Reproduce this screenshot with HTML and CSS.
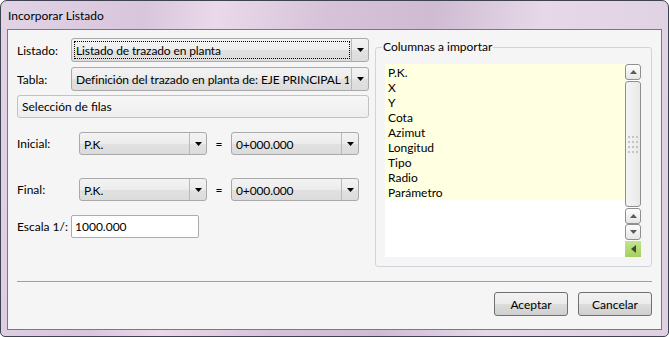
FILE: index.html
```html
<!DOCTYPE html>
<html lang="es">
<head>
    <meta charset="UTF-8">
    <meta name="viewport" content="width=device-width, initial-scale=1.0">
    <title>Incorporar Listado</title>
    <link rel="stylesheet" href="styles.css">
</head>
<body>

<div class="window">
    <div class="titlebar">Incorporar Listado</div>

    <div class="client">
        <div class="main">

            <!-- Left side: listing, table and row selection -->
            <div class="left">
                <div class="row">
                    <span class="label">Listado:</span>
                    <div class="combo wide">
                        <span class="combo-text focused">Listado de trazado en planta</span>
                        <span class="combo-arrow"><svg width="7" height="4" viewBox="0 0 7 4"><path d="M0 0h7L3.5 4z" fill="#000"/></svg></span>
                    </div>
                </div>

                <div class="row row-tabla">
                    <span class="label">Tabla:</span>
                    <div class="combo wide">
                        <span class="combo-text">Definición del trazado en planta de: EJE PRINCIPAL 1</span>
                        <span class="combo-arrow"><svg width="7" height="4" viewBox="0 0 7 4"><path d="M0 0h7L3.5 4z" fill="#000"/></svg></span>
                    </div>
                </div>

                <div class="section-bar">Selección de filas</div>

                <div class="row row-range row-inicial">
                    <span class="label label-range">Inicial:</span>
                    <div class="combo small">
                        <span class="combo-text">P.K.</span>
                        <span class="combo-arrow"><svg width="7" height="4" viewBox="0 0 7 4"><path d="M0 0h7L3.5 4z" fill="#000"/></svg></span>
                    </div>
                    <span class="equals">=</span>
                    <div class="combo small">
                        <span class="combo-text">0+000.000</span>
                        <span class="combo-arrow"><svg width="7" height="4" viewBox="0 0 7 4"><path d="M0 0h7L3.5 4z" fill="#000"/></svg></span>
                    </div>
                </div>

                <div class="row row-range row-final">
                    <span class="label label-range">Final:</span>
                    <div class="combo small">
                        <span class="combo-text">P.K.</span>
                        <span class="combo-arrow"><svg width="7" height="4" viewBox="0 0 7 4"><path d="M0 0h7L3.5 4z" fill="#000"/></svg></span>
                    </div>
                    <span class="equals">=</span>
                    <div class="combo small">
                        <span class="combo-text">0+000.000</span>
                        <span class="combo-arrow"><svg width="7" height="4" viewBox="0 0 7 4"><path d="M0 0h7L3.5 4z" fill="#000"/></svg></span>
                    </div>
                </div>

                <div class="row row-scale">
                    <span class="label">Escala 1/:</span>
                    <input class="textbox" type="text" value="1000.000">
                </div>
            </div>

            <!-- Right side: columns to import -->
            <fieldset class="group">
                <legend>Columnas a importar</legend>
                <div class="listbox">
                    <ul class="items">
                        <li>P.K.</li>
                        <li>X</li>
                        <li>Y</li>
                        <li>Cota</li>
                        <li>Azimut</li>
                        <li>Longitud</li>
                        <li>Tipo</li>
                        <li>Radio</li>
                        <li>Parámetro</li>
                    </ul>
                    <div class="scrollbar">
                        <div class="sb-btn"><svg width="7" height="4" viewBox="0 0 7 4"><path d="M0 4h7L3.5 0z" fill="#5a5a5a"/></svg></div>
                        <div class="sb-thumb">
                            <svg width="10" height="17" viewBox="0 0 10 17">
                                <g fill="#c4c4c4">
                                    <rect x="0" y="0" width="2" height="2"/><rect x="4" y="0" width="2" height="2"/><rect x="8" y="0" width="2" height="2"/>
                                    <rect x="0" y="5" width="2" height="2"/><rect x="4" y="5" width="2" height="2"/><rect x="8" y="5" width="2" height="2"/>
                                    <rect x="0" y="10" width="2" height="2"/><rect x="4" y="10" width="2" height="2"/><rect x="8" y="10" width="2" height="2"/>
                                    <rect x="0" y="15" width="2" height="2"/><rect x="4" y="15" width="2" height="2"/><rect x="8" y="15" width="2" height="2"/>
                                </g>
                            </svg>
                        </div>
                        <div class="sb-btn"><svg width="7" height="4" viewBox="0 0 7 4"><path d="M0 4h7L3.5 0z" fill="#5a5a5a"/></svg></div>
                        <div class="sb-btn sb-down"><svg width="7" height="4" viewBox="0 0 7 4"><path d="M0 0h7L3.5 4z" fill="#5a5a5a"/></svg></div>
                        <div class="sb-green"><svg width="5" height="8" viewBox="0 0 5 8"><path d="M5 0v8L0 4z" fill="#3d4a2c"/></svg></div>
                    </div>
                </div>
            </fieldset>
        </div>

        <div class="separator"></div>

        <div class="buttons">
            <button class="btn">Aceptar</button>
            <button class="btn">Cancelar</button>
        </div>
    </div>
</div>

</body>
</html>
```

FILE: styles.css
```css
* {
    box-sizing: border-box;
}

body {
    margin: 0;
    font-family: Lato, "Noto Sans", sans-serif;
    font-size: 12px;
    color: #000;
}

/* Window frame */
.window {
    width: 669px;
    height: 337px;
    display: flex;
    flex-direction: column;
    border: 1px solid #3f4250;
    border-radius: 7px 7px 5px 5px;
    padding: 0 6px 6px 6px;
    background: linear-gradient(100deg, #e2d3e5 0%, #d8c6dc 20%, #ead9ea 30%, #d6c3d9 45%, #cfbcd3 60%, #e6d8e8 75%, #ddd0e1 100%);
}

.titlebar {
    height: 28px;
    padding: 7px 0 0 1px;
    line-height: 16px;
}

.client {
    flex: 1;
    display: flex;
    flex-direction: column;
    border: 1px solid #7c7784;
    background-color: #f5f5f5;
    padding: 8px 9px 0 9px;
}

.main {
    display: flex;
    gap: 6px;
}

/* Left column */
.left {
    width: 352px;
    display: flex;
    flex-direction: column;
}

.row {
    display: flex;
    align-items: center;
}

.row-tabla {
    margin-top: 5px;
}

.row-inicial {
    margin-top: 14px;
}

.row-final {
    margin-top: 23px;
}

.row-scale {
    margin-top: 14px;
}

.label {
    width: 54px;
    flex-shrink: 0;
}

.label-range {
    width: 62px;
}

.combo {
    display: flex;
    height: 24px;
    border: 1px solid #a9a9a9;
    border-radius: 3px;
    background: linear-gradient(#f3f3f3 0%, #ececec 50%, #e1e1e1 51%, #dcdcdc 100%);
}

.combo.wide {
    width: 298px;
}

.combo.small {
    width: 128px;
    height: 23px;
}

.combo-text {
    flex: 1;
    margin: 2px 1px 2px 2px;
    padding-left: 1px;
    line-height: 17px;
    letter-spacing: -0.12px;
    white-space: nowrap;
    overflow: hidden;
    border: 1px dotted transparent;
}

.combo-text.focused {
    border-color: #000;
}

.combo-arrow {
    width: 17px;
    flex-shrink: 0;
    display: flex;
    align-items: center;
    justify-content: center;
    border-left: 1px solid #b9b9b9;
}

.section-bar {
    margin-top: 4px;
    height: 23px;
    padding-left: 4px;
    line-height: 21px;
    border: 1px solid #c2c2c2;
    border-radius: 3px;
    background: linear-gradient(#f7f7f7, #eeeeee);
}

.equals {
    width: 24px;
    text-align: center;
}

.textbox {
    width: 128px;
    height: 23px;
    padding: 0 3px;
    border: 1px solid #acacac;
    border-radius: 2px;
    background-color: #fff;
    font-family: inherit;
    font-size: 12px;
    color: #000;
}

/* Right group box */
.group {
    width: 277px;
    margin: 0;
    padding: 8px 10px 9px 9px;
    border: 1px solid #cfd5da;
    border-radius: 3px;
}

.group legend {
    margin-left: -3px;
    padding: 0 1px;
    line-height: 18px;
}

.listbox {
    display: flex;
    height: 193px;
    background-color: #fff;
}

.items {
    flex: 1;
    align-self: flex-start;
    list-style: none;
    margin: 0;
    padding: 1px 0 0 3px;
    background-color: #ffffe1;
}

.items li {
    height: 15px;
    line-height: 15px;
}

.scrollbar {
    width: 16px;
    display: flex;
    flex-direction: column;
    gap: 1px;
}

.sb-btn {
    height: 16px;
    display: flex;
    align-items: center;
    justify-content: center;
    border: 1px solid #8e8f8f;
    border-radius: 3px;
    background: linear-gradient(#fdfdfd, #e6e6e6);
}

.sb-down {
    margin-top: -1px;
}

.sb-thumb {
    flex: 1;
    display: flex;
    align-items: center;
    justify-content: center;
    border: 1px solid #8e8f8f;
    border-radius: 3px;
    background: linear-gradient(90deg, #f4f4f4, #e9e9e9);
}

.sb-green {
    height: 16px;
    display: flex;
    align-items: center;
    justify-content: center;
    background: linear-gradient(#c2e48c, #a4d05e);
}

/* Bottom */
.separator {
    margin-top: 14px;
    height: 1px;
    background-color: #a0a0a0;
}

.buttons {
    display: flex;
    justify-content: flex-end;
    gap: 10px;
    margin-top: 10px;
}

.btn {
    width: 74px;
    height: 24px;
    padding: 0;
    border: 1px solid #707070;
    border-radius: 3px;
    background: linear-gradient(#f2f2f2 0%, #ebebeb 50%, #dddddd 51%, #cfcfcf 100%);
    font-family: inherit;
    font-size: 12px;
    color: #000;
}
```
